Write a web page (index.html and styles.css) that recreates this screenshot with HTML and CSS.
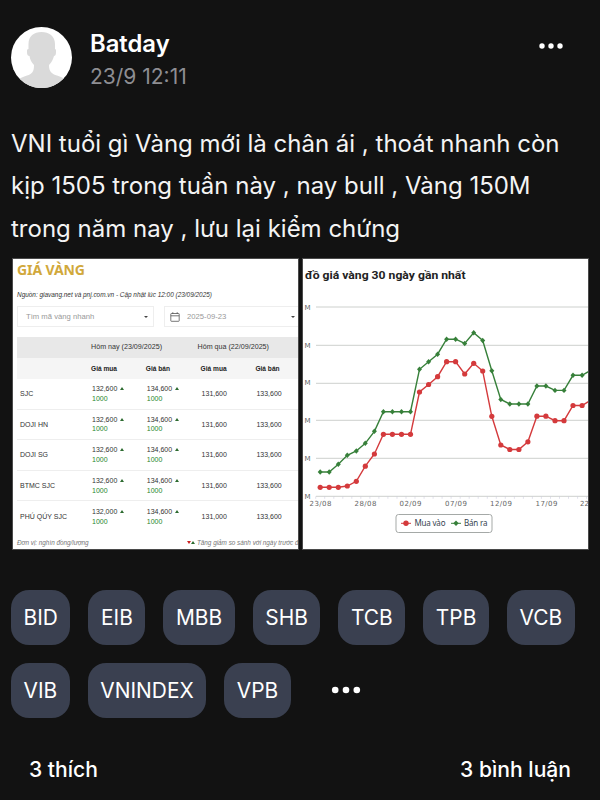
FILE: index.html
```html
<!DOCTYPE html>
<html lang="vi">
  <head>
    <meta charset="UTF-8" />
    <meta name="viewport" content="width=device-width, initial-scale=1.0" />
    <title>Batday</title>
    <link rel="stylesheet" href="styles.css">
  </head>

  <body>
    <div class="post">
      <div class="post-header">
        <svg class="avatar" viewBox="0 0 61 61">
          <circle cx="30.5" cy="30.5" r="30.5" fill="#fff" />
          <path fill="#dadada" d="M30.500 5C38 5 44 9 44 17V22C45 22 45 23 45 25C45 28 44 29 43 29C42 33 40 36 38 38C38 45 41 47 46 48.500C49 49.500 51 50.500 53 51.300A30.500 30.500 0 0 1 8.500 51.700C11 50.500 13 49.500 16 48.500C21 47 23 45 23 38C21 36 19 33 18.500 29C17 29 16 28 16 25C16 23 16 22 17.500 22V17C17.500 9 23 5 30.500 5Z" />
        </svg>
        <div class="user">
          <div class="name">Batday</div>
          <div class="date">23/9 12:11</div>
        </div>
        <svg class="menu" width="24" height="6" viewBox="0 0 24 6" fill="#fff">
          <circle cx="3" cy="3" r="2.700" />
          <circle cx="12" cy="3" r="2.700" />
          <circle cx="21" cy="3" r="2.700" />
        </svg>
      </div>

      <p class="content">
        VNI tuổi gì Vàng mới là chân ái , thoát nhanh còn<br />
        kịp 1505 trong tuần này , nay bull , Vàng 150M<br />
        trong năm nay , lưu lại kiểm chứng
      </p>

      <div class="images">
        <div class="image gold">
          <h2 class="gold-title">GIÁ VÀNG</h2>
          <div class="source">Nguồn: giavang.net và pnj.com.vn - Cập nhật lúc 12:00 (23/09/2025)</div>
          <div class="filters">
            <div class="select">
              <span>Tìm mã vàng nhanh</span>
              <i class="caret"></i>
            </div>
            <div class="select date-select">
              <svg width="10" height="10" viewBox="0 0 10 10" fill="none" stroke="#555" stroke-width="0.8">
                <rect x="0.800" y="1.500" width="8.400" height="7.800" rx="0.600" />
                <path d="M0.800 3.800H9.200M2.800 0.200V2M7.200 0.200V2" />
              </svg>
              <span>2025-09-23</span>
              <i class="caret"></i>
            </div>
          </div>
          <div class="table">
            <div class="row days"><b></b><span class="day">Hôm nay (23/09/2025)</span><span class="day">Hôm qua (22/09/2025)</span></div>
            <div class="row types"><b></b><b>Giá mua</b><b>Giá bán</b><b>Giá mua</b><b>Giá bán</b></div>
            <div class="row"><span class="code">SJC</span><span>132,600 <i class="up"></i><em>1000</em></span><span>134,600 <i class="up"></i><em>1000</em></span><span>131,600</span><span>133,600</span></div>
            <div class="row"><span class="code">DOJI HN</span><span>132,600 <i class="up"></i><em>1000</em></span><span>134,600 <i class="up"></i><em>1000</em></span><span>131,600</span><span>133,600</span></div>
            <div class="row"><span class="code">DOJI SG</span><span>132,600 <i class="up"></i><em>1000</em></span><span>134,600 <i class="up"></i><em>1000</em></span><span>131,600</span><span>133,600</span></div>
            <div class="row"><span class="code">BTMC SJC</span><span>132,600 <i class="up"></i><em>1000</em></span><span>134,600 <i class="up"></i><em>1000</em></span><span>131,600</span><span>133,600</span></div>
            <div class="row"><span class="code">PHÚ QÚY SJC</span><span>132,000 <i class="up"></i><em>1000</em></span><span>134,600 <i class="up"></i><em>1000</em></span><span>131,000</span><span>133,600</span></div>
          </div>
          <div class="notes">
            <span>Đơn vị: nghìn đồng/lượng</span>
            <span class="legend"><i class="down"></i><i class="up"></i> Tăng giảm so sánh với ngày trước đ</span>
          </div>
        </div>

        <div class="image">
          <svg class="chart" viewBox="0 0 285 290">
            <defs>
              <marker id="dot" markerUnits="userSpaceOnUse" markerWidth="8" markerHeight="8" refX="4" refY="4">
                <circle cx="4" cy="4" r="2.600" fill="#d43a3c" />
              </marker>
              <marker id="diamond" markerUnits="userSpaceOnUse" markerWidth="8" markerHeight="8" refX="4" refY="4">
                <path d="M4 1.300L6.500 4L4 6.700L1.500 4Z" fill="#37803a" />
              </marker>
            </defs>
            <text class="chart-title" x="2" y="19.500" textLength="160.500" lengthAdjust="spacingAndGlyphs">đồ giá vàng 30 ngày gần nhất</text>
            <path class="grid" d="M13 48H285M13 86.300H285M13 124.300H285M13 161.300H285M13 199.300H285M13 237.300H285" />
            <path class="ticks" id="ticks" />
            <g class="axis">
              <text x="1.500" y="50.500">M</text>
              <text x="1.500" y="88.500">M</text>
              <text x="1.500" y="126">M</text>
              <text x="1.500" y="163.500">M</text>
              <text x="1.500" y="201.500">M</text>
              <text x="1.500" y="239.500">M</text>
              <text x="6.500" y="246.500" textLength="22">23/08</text>
              <text x="51.500" y="246.500" textLength="22">28/08</text>
              <text x="96.500" y="246.500" textLength="22">02/09</text>
              <text x="142" y="246.500" textLength="22">07/09</text>
              <text x="187" y="246.500" textLength="22">12/09</text>
              <text x="232.500" y="246.500" textLength="22">17/09</text>
              <text x="277" y="246.500">22</text>
            </g>
            <polyline class="sell" id="sell" />
            <polyline class="buy" id="buy" />
            <rect x="93" y="255.500" width="96" height="18" rx="2.500" fill="#fff" stroke="#a5a9a7" />
            <path class="buy-key" d="M98 264.300H108" />
            <circle cx="103" cy="264.300" r="2.700" fill="#d43a3c" />
            <path class="sell-key" d="M148 264.300H158" />
            <path d="M153 261.500L155.700 264.300L153 267.100L150.300 264.300Z" fill="#37803a" />
            <text class="key" x="111.500" y="267.300" textLength="31">Mua vào</text>
            <text class="key" x="161" y="267.300" textLength="23.500">Bán ra</text>
          </svg>
        </div>
      </div>

      <div class="tags">
        <span class="tag">BID</span>
        <span class="tag">EIB</span>
        <span class="tag">MBB</span>
        <span class="tag">SHB</span>
        <span class="tag">TCB</span>
        <span class="tag">TPB</span>
        <span class="tag">VCB</span>
        <span class="tag">VIB</span>
        <span class="tag">VNINDEX</span>
        <span class="tag">VPB</span>
        <svg class="more" width="30" height="8" viewBox="0 0 30 8" fill="#fff">
          <circle cx="4.200" cy="4" r="3.300" />
          <circle cx="15" cy="4" r="3.300" />
          <circle cx="25.800" cy="4" r="3.300" />
        </svg>
      </div>

      <div class="stats">
        <span>3 thích</span>
        <span>3 bình luận</span>
      </div>
    </div>

    <script>
      // one value per day, from 23/08
      const sell = [213, 213, 205.3, 196.3, 192, 184.3, 172.3, 152.7, 152.7, 152.7, 152.7, 110.3, 102.7, 95.2, 80.2, 80.2, 84.5, 73.8, 81.5, 111.7, 140.5, 145, 145, 145, 127, 127, 131.4, 131.4, 116.3, 116.3, 111];
      const buy = [228.3, 228.3, 228.3, 227, 222.3, 207.2, 195, 175.3, 175.3, 175.3, 175.3, 133, 125.5, 117.7, 102.7, 102.7, 115, 104.3, 112, 157.3, 186, 190.5, 190.5, 182.8, 157.2, 157.2, 161.7, 161.7, 146.5, 146.5, 141];
      const step = 9.03;

      const toPoints = (values) => values.map((y, i) => (17.2 + i * step).toFixed(1) + "," + y).join(" ");
      document.getElementById("sell").setAttribute("points", toPoints(sell));
      document.getElementById("buy").setAttribute("points", toPoints(buy));

      let ticks = "";
      for (let i = 0; i < 31; i++) {
        ticks += "M" + (12.7 + i * step).toFixed(1) + " 237.3v2.5";
      }
      document.getElementById("ticks").setAttribute("d", ticks);
    </script>
  </body>
</html>
```
FILE: styles.css
```css
body {
  margin: 0;
  background-color: #121212;
  color: #fff;
  font-family: Inter, sans-serif;
}

.post {
  box-sizing: border-box;
  width: 600px;
  height: 800px;
  padding: 27px 11px 0;
  overflow: hidden;
}

.post-header {
  display: flex;
  height: 61px;
}

.avatar {
  width: 61px;
  height: 61px;
}

.user {
  flex: 1;
  margin-left: 18px;
}

.name {
  font-size: 23.8px;
  font-weight: 600;
  line-height: 33px;
}

.date {
  color: #8e8e93;
  font-size: 21px;
  line-height: 33px;
}

.menu {
  margin: 16px 26px 0 0;
}

.content {
  margin: 34.5px 0 0;
  font-size: 24px;
  line-height: 42.5px;
  color: #f4f4f4;
  white-space: nowrap;
}

.images {
  display: flex;
  gap: 5px;
  margin: 9px 0 0 2px;
}

.image {
  width: 285px;
  height: 290px;
  background-color: #fff;
  overflow: hidden;
  box-shadow: 0 0 0 1px #4a4a4a;
}

.gold {
  box-sizing: border-box;
  padding-left: 4px;
  color: #333;
  font-family: "Liberation Sans", sans-serif;
  font-size: 7px;
  white-space: nowrap;
}

.gold-title {
  margin: 0;
  height: 23px;
  color: #d1a83b;
  font-family: "Noto Sans", sans-serif;
  font-size: 14px;
  font-weight: 700;
  letter-spacing: -0.1px;
  line-height: 22px;
}

.source {
  height: 24px;
  font-size: 6.43px;
  font-style: italic;
  line-height: 25px;
}

.filters {
  display: flex;
  gap: 10px;
}

.select {
  box-sizing: border-box;
  display: flex;
  flex: none;
  align-items: center;
  width: 137px;
  height: 21px;
  padding: 0 5px 0 8px;
  border: 1px solid #eee;
  color: #999;
  font-size: 7.7px;
}

.date-select {
  padding-left: 5px;
}

.date-select svg {
  margin-right: 7px;
}

.caret {
  margin-left: auto;
  border: 2px solid transparent;
  border-top: 2.5px solid #444;
  border-bottom: 0;
}

.table {
  margin-top: 10px;
}

.row {
  box-sizing: border-box;
  display: grid;
  grid-template-columns: 75px 54.8px 54.8px 54.8px 55px;
  align-items: center;
  width: 295px;
  height: 30.6px;
  border-bottom: 1px solid #eee;
  line-height: 9.5px;
}

.row:last-child {
  border-bottom: 0;
}

.row.days {
  grid-template-columns: 74px 106.5px 114px;
  height: 21px;
  background-color: #e8e8e8;
  border: 0;
  font-size: 7.15px;
}

.row.types {
  grid-template-columns: 74px 54.8px 54.8px 54.8px 55px;
  height: 21px;
  background-color: #f5f5f5;
  border: 0;
  color: #222;
  font-size: 6.6px;
}

.code {
  padding-left: 3px;
}

.row em {
  display: block;
  color: #27852b;
  font-style: normal;
}

.up,
.down {
  display: inline-block;
  border: 2px solid transparent;
  border-top: 0;
  border-bottom: 3px solid #2d6b30;
  vertical-align: 1px;
}

.row .up {
  margin-left: 1px;
}

.down {
  border-top: 3px solid #c22;
  border-bottom: 0;
}

.notes {
  display: flex;
  gap: 98.5px;
  color: #777;
  font-size: 6.35px;
  font-style: italic;
  line-height: 21px;
}

.chart {
  display: block;
  width: 285px;
  height: 290px;
}

.chart-title {
  fill: #222;
  font: bold 11.8px Roboto, sans-serif;
}

.grid {
  stroke: #cdd0cd;
}

.ticks {
  stroke: #ccd;
  stroke-width: 0.6;
}

.axis {
  fill: #666;
  font: 7px "DejaVu Sans", sans-serif;
}

.sell,
.buy {
  fill: none;
  stroke-width: 1.4;
}

.sell {
  stroke: #37803a;
  marker: url(#diamond);
}

.buy {
  stroke: #d43a3c;
  marker: url(#dot);
}

.buy-key {
  stroke: #d43a3c;
}

.sell-key {
  stroke: #37803a;
}

.key {
  fill: #34434f;
  font: 8px "Noto Sans", sans-serif;
}

.tags {
  display: flex;
  flex-wrap: wrap;
  gap: 18px;
  margin-top: 41px;
}

.tag {
  height: 55px;
  padding: 0 12.55px;
  border-radius: 18px;
  background-color: #3a4050;
  font-size: 20.9px;
  line-height: 55px;
}

.more {
  margin: 23px 0 0 22px;
}

.stats {
  display: flex;
  justify-content: space-between;
  margin: 36px 18px 0;
  font-size: 21.1px;
  font-weight: 500;
  line-height: 32px;
}
```
